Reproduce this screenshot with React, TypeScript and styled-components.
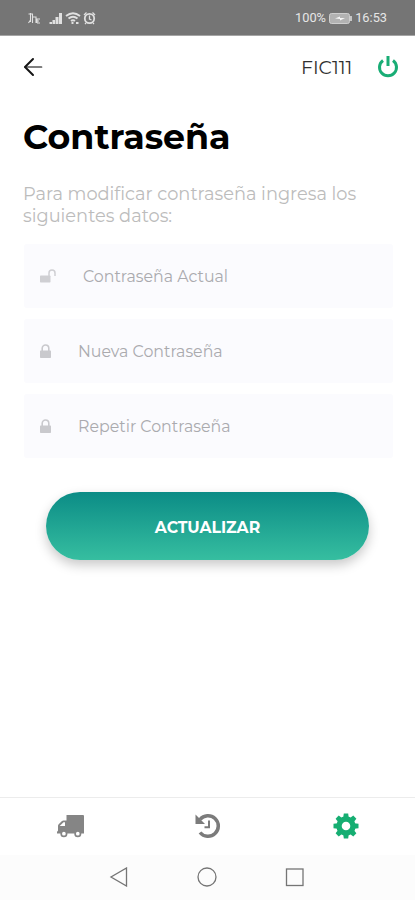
import React from "react";
import styled, { createGlobalStyle } from "styled-components";

const GlobalStyle = createGlobalStyle`
  * { box-sizing: border-box; }
  body { margin: 0; background: #fff; font-family: Montserrat, Inter, sans-serif; }
`;

const Screen = styled.div`
  width: 415px;
  height: 900px;
  display: flex;
  flex-direction: column;
  overflow: hidden;
  background: #fff;
`;

const StatusBar = styled.div`
  height: 36px;
  flex: none;
  display: flex;
  align-items: center;
  justify-content: space-between;
  padding: 1px 25px 0 27px;
  background: #757575;
  border-bottom: 1px solid #a5a5a5;
  color: #e6e6e6;
`;

const StatusGroup = styled.div`
  display: flex;
  align-items: center;
  font: 400 12.8px/14px Roboto, sans-serif;
  white-space: nowrap;
  svg { display: block; }
`;

const StatusText = styled.span<{ $w: number }>`
  width: ${(p) => p.$w}px;
`;

const Header = styled.header`
  height: 64px;
  flex: none;
  display: flex;
  align-items: center;
  padding: 0 16px 2px 23px;
  svg { display: block; }
`;

const UserCode = styled.span`
  margin-left: auto;
  width: 76px;
  font-size: 18.8px;
  line-height: 22px;
  color: #303030;
  padding-top: 2px;
`;

const Content = styled.main`
  flex: 1;
  display: flex;
  flex-direction: column;
  padding: 16px 20px 0 23px;
`;

const Title = styled.h1`
  margin: 0;
  font-size: 34.8px;
  line-height: 42px;
  font-weight: 700;
  color: #000;
  white-space: nowrap;
`;

const Intro = styled.p`
  margin: 25px 0 0;
  font-size: 17.8px;
  line-height: 22px;
  color: #bcbcbc;
  white-space: nowrap;
`;

const Form = styled.form`
  display: flex;
  flex-direction: column;
  gap: 11px;
  margin: 17px 0 0 1px;
`;

const Field = styled.label`
  display: flex;
  align-items: center;
  gap: 25px;
  width: 369px;
  height: 64px;
  padding: 1px 0 0 15px;
  background: #fbfbfe;
  border-radius: 3px;
  svg { display: block; flex: none; }
`;

const Placeholder = styled.span`
  margin-left: 1px;
  font-size: 15.8px;
  line-height: 20px;
  color: #aaaaae;
`;

const SubmitButton = styled.button`
  width: 323px;
  height: 68px;
  margin: 34px 0 0 23px;
  padding: 3px 0 0;
  border: 0;
  border-radius: 34px;
  background: linear-gradient(#0b8c86, #36bea0);
  box-shadow: 0 5px 12px rgba(0, 0, 0, 0.22);
  color: #fff;
  font: 700 15.7px/20px Montserrat, Inter, sans-serif;
`;

const TabBar = styled.nav`
  height: 58px;
  flex: none;
  display: grid;
  grid-template-columns: repeat(3, 1fr);
  place-items: center;
  padding: 0 0 2px 1px;
  border-top: 1px solid #ececec;
`;

const Tab = styled.a<{ $active?: boolean }>`
  display: flex;
  color: ${(p) => (p.$active ? "#16ae72" : "#858585")};
`;

const SystemBar = styled.div`
  height: 45px;
  flex: none;
  display: flex;
  justify-content: center;
  align-items: center;
  gap: 68px;
  padding: 0 1px 1px 0;
  background: #fcfcfc;
`;

const SystemGlyph = styled.svg`
  width: 20px;
  height: 20px;
  fill: none;
  stroke: #757575;
  stroke-width: 1.3;
`;

const SignalIcons = () => (
  <svg width="70" height="16" viewBox="0 0 70 16" fill="none" stroke="#e0e0e0">
    <path d="M1.500 4h4.500M3.500 3v9M1.500 13l2-3M5.500 4v9M6 7h3v6M10 13V9h3M10 11h2M10 13h3" strokeWidth="1.100" />
    <path d="M22.500 14v-2h2.500v2zM25.500 14v-4h2.500v4zM28.500 14V7h3v7zM32 14V3h3v11z" fill="#e0e0e0" stroke="none" />
    <path d="M39 6q7-5.500 14 0M41.500 8.500q4.500-3.500 9 0M44 11q2-1.500 4 0" strokeWidth="1.900" />
    <path d="M44.500 13h2M49 13h2.500" strokeWidth="2" />
    <circle cx="62.500" cy="8.500" r="4.700" strokeWidth="1.800" />
    <path d="M57 5l2.500-2.500M68 5l-2.500-2.500M62.500 5.500V9l2 1M59 13l-1 1M66 13l1 1" strokeWidth="1.300" />
  </svg>
);

const Battery = () => (
  <svg width="23" height="11" viewBox="0 0 23 11">
    <rect x=".5" y=".5" width="20" height="10" rx="2" fill="#b2b2b2" stroke="#cecece" />
    <path d="M22 3v5" stroke="#e2e2e2" strokeWidth="1.500" />
    <path d="M6 5.500l5-2v1.500h5l-5 2.500V6z" fill="#f5f5f5" />
  </svg>
);

const BackArrow = () => (
  <svg width="20" height="20" viewBox="0 0 20 20" fill="none" strokeLinecap="round" strokeLinejoin="round">
    <path d="M2 10h16.500" stroke="#555" strokeWidth="1.700" />
    <path d="M10 2l-8 8 8 8" stroke="#151515" strokeWidth="2" />
  </svg>
);

const PowerIcon = () => (
  <svg width="22" height="24" viewBox="0 0 22 24" fill="none" stroke="#19ad75" strokeWidth="3">
    <path d="M6 5.500a8.500 8.500 0 1 0 10 0M11 1v10" />
  </svg>
);

const UnlockIcon = () => (
  <svg width="18" height="15" viewBox="0 0 18 15">
    <rect x="1" y="6.500" width="10.500" height="7" rx=".7" fill="#cfcfd3" />
    <path d="M10 7V4a3 3 0 0 1 6 0v3" fill="none" stroke="#cfcfd3" strokeWidth="1.500" />
  </svg>
);

const LockIcon = () => (
  <svg width="13" height="15" viewBox="0 0 13 15">
    <rect x="1" y="6.500" width="11" height="7.500" rx=".7" fill="#c9c9cd" />
    <path d="M3.200 7V4.300a3.300 3.300 0 0 1 6.600 0V7" fill="none" stroke="#c9c9cd" strokeWidth="1.600" />
  </svg>
);

const TruckIcon = () => (
  <svg width="29" height="24" viewBox="0 0 29 24" fill="#858585">
    <path fillRule="evenodd" d="M10.500 1h16.500q1 0 1 1v17.500H1v-2q1 0 1-1v-4.500q0-1 .7-1.700l3-3Q6.500 6.500 7.500 6.500h3zM3.700 12H9V8.300H7.500z" />
    <circle cx="7.900" cy="19.700" r="2.700" fill="#fff" stroke="#858585" strokeWidth="1.700" />
    <circle cx="21.800" cy="19.700" r="2.700" fill="#fff" stroke="#858585" strokeWidth="1.700" />
  </svg>
);

const HistoryIcon = () => (
  <svg width="26" height="26" viewBox="0 0 26 26" fill="none" stroke="#7b7b7b">
    <path d="M5 6.500A10.300 10.300 0 1 1 5 19.500" strokeWidth="3.500" />
    <path d="M.5 1.500v9.500h9.500z" fill="#7b7b7b" stroke="none" />
    <path d="M14 7.500v6.700H9.500" strokeWidth="2" />
  </svg>
);

const TEETH = [0, 45, 90, 135, 180, 225, 270, 315];

const GearIcon = () => (
  <svg width="26" height="26" viewBox="0 0 26 26">
    <circle cx="13" cy="13" r="7" fill="none" stroke="currentColor" strokeWidth="5.400" />
    {TEETH.map((angle) => (
      <path key={angle} d="M10.200 5l.600-4.500h4.400l.600 4.500z" fill="currentColor" transform={`rotate(${angle} 13 13)`} />
    ))}
  </svg>
);

export default function App() {
  return (
    <>
      <GlobalStyle />
      <Screen>
        <StatusBar>
          <StatusGroup><SignalIcons /></StatusGroup>
          <StatusGroup>
            <StatusText $w={34}>100%</StatusText>
            <Battery />
            <StatusText $w={38}>&nbsp;16:53</StatusText>
          </StatusGroup>
        </StatusBar>
        <Header>
          <BackArrow />
          <UserCode>FIC111</UserCode>
          <PowerIcon />
        </Header>
        <Content>
          <Title>Contraseña</Title>
          <Intro>Para modificar contraseña ingresa los<br />siguientes datos:</Intro>
          <Form>
            <Field><UnlockIcon /><Placeholder>Contraseña Actual</Placeholder></Field>
            <Field><LockIcon /><Placeholder>Nueva Contraseña</Placeholder></Field>
            <Field><LockIcon /><Placeholder>Repetir Contraseña</Placeholder></Field>
          </Form>
          <SubmitButton type="button">ACTUALIZAR</SubmitButton>
        </Content>
        <TabBar>
          <Tab><TruckIcon /></Tab>
          <Tab><HistoryIcon /></Tab>
          <Tab $active><GearIcon /></Tab>
        </TabBar>
        <SystemBar>
          <SystemGlyph viewBox="0 0 20 20"><path d="M17.500 1v18L2 10z" /></SystemGlyph>
          <SystemGlyph viewBox="0 0 20 20"><circle cx="10" cy="10" r="9" /></SystemGlyph>
          <SystemGlyph viewBox="0 0 20 20"><rect x="1.500" y="2" width="16.500" height="16.500" /></SystemGlyph>
        </SystemBar>
      </Screen>
    </>
  );
}
